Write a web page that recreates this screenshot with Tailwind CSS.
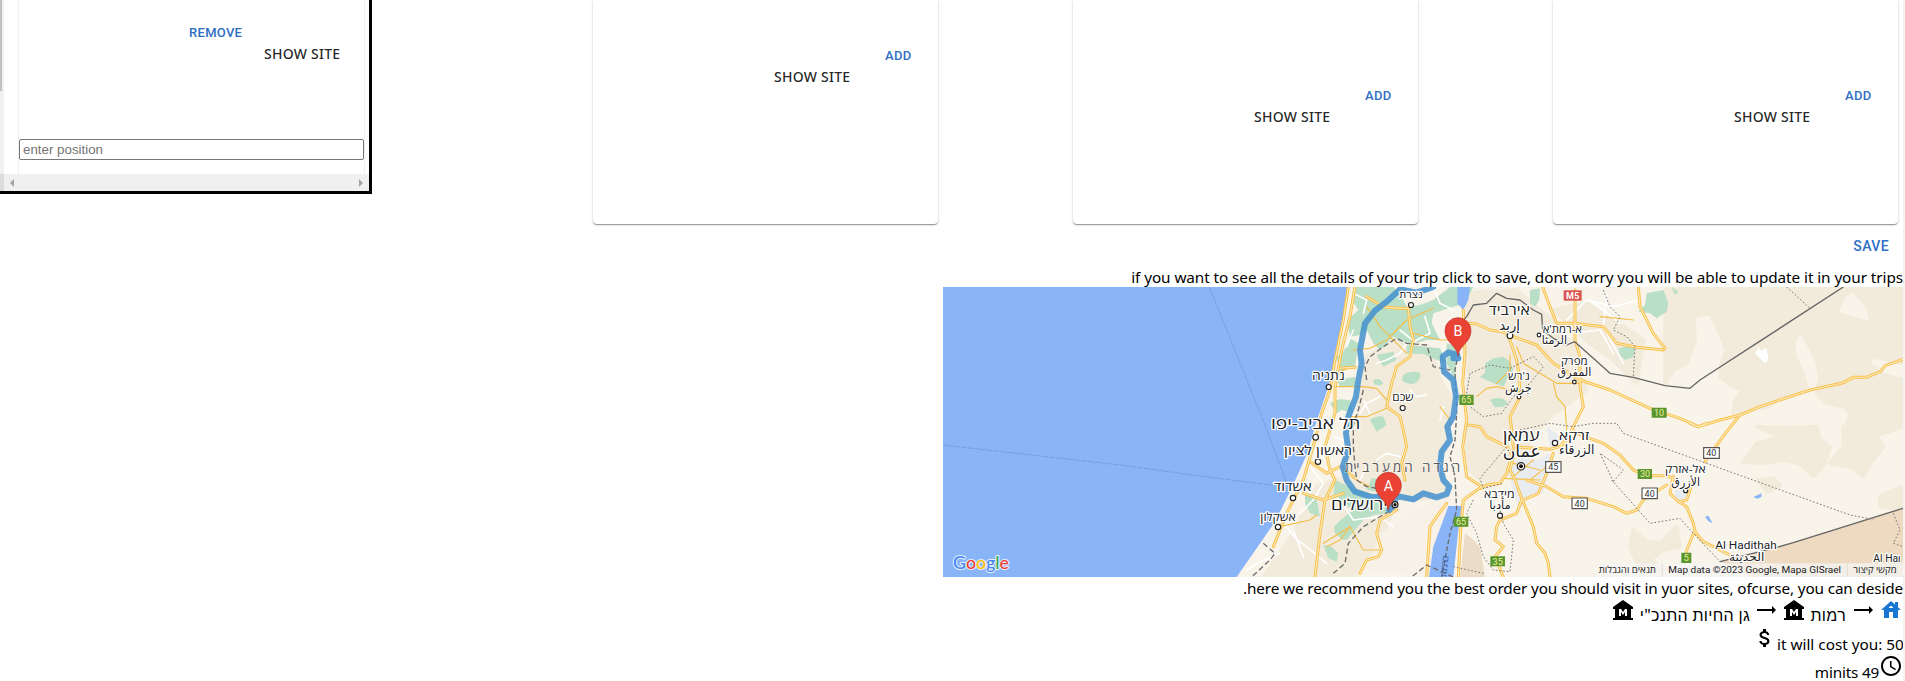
<!DOCTYPE html>
<html lang="he">
<head>
<meta charset="utf-8">
<title>Trip planner</title>
<script src="https://cdn.jsdelivr.net/npm/@tailwindcss/browser@4"></script>
</head>
<body class="bg-white">
<div class="flex h-[681px] w-[1905px] overflow-hidden font-['Noto_Sans','Liberation_Sans',sans-serif] text-black">
<main class="flex w-[1903px] flex-col">

  <!-- Site cards -->
  <section class="flex h-[224px] items-start">
    <div class="flex h-[194px] w-[372px] border-r-[3px] border-b-[3px] border-black">
      <div class="flex w-1 flex-col bg-[#f1f1f1]">
        <div class="h-[91px] w-0.5 bg-[#c1c1c1]"></div>
        <div class="mt-auto h-[17px] bg-[#dcdcdc]"></div>
      </div>
      <div class="flex grow flex-col">
        <div class="ml-[14px] flex h-[174px] w-[347px] flex-col border-x border-[#f0f0f0]">
          <div class="mt-[23px] ml-[170px] h-5 font-['Roboto',sans-serif] text-[13px] leading-5 font-medium tracking-[0.3px] text-[#2f6fc4]">REMOVE</div>
          <div class="ml-[245px] h-[22px] text-[14px] leading-[22px] font-medium tracking-[0.25px] text-black/87">SHOW SITE</div>
          <div class="mt-[74px] flex h-[21px] items-center rounded-[2px] border border-[#767676] px-[3px] font-['Liberation_Sans',sans-serif] text-[13.33px] text-[#757575]">enter position</div>
        </div>
        <div class="flex h-[17px] items-center justify-between bg-[#f0f0f0] px-1.5">
          <svg class="h-2 w-1" viewBox="0 0 4 8"><path d="M4 0v8L0 4z" fill="#a3a3a3"/></svg>
          <svg class="h-2 w-1" viewBox="0 0 4 8"><path d="M0 0v8l4-4z" fill="#a3a3a3"/></svg>
        </div>
      </div>
    </div>

    <div class="ml-[221px] flex gap-[135px]">
      <div class="h-[224px] w-[345px] rounded-b bg-white pt-[46px] shadow-[0_1px_1px_rgba(0,0,0,0.35),0_1px_3px_rgba(0,0,0,0.14)]">
        <div class="ml-[292px] h-5 font-['Roboto',sans-serif] text-[13px] leading-5 font-medium tracking-[0.3px] text-[#2f6fc4]">ADD</div>
        <div class="ml-[181px] h-[22px] text-[14px] leading-[22px] font-medium tracking-[0.25px] text-black/87">SHOW SITE</div>
      </div>
      <div class="h-[224px] w-[345px] rounded-b bg-white pt-[86px] shadow-[0_1px_1px_rgba(0,0,0,0.35),0_1px_3px_rgba(0,0,0,0.14)]">
        <div class="ml-[292px] h-5 font-['Roboto',sans-serif] text-[13px] leading-5 font-medium tracking-[0.3px] text-[#2f6fc4]">ADD</div>
        <div class="ml-[181px] h-[22px] text-[14px] leading-[22px] font-medium tracking-[0.25px] text-black/87">SHOW SITE</div>
      </div>
      <div class="h-[224px] w-[345px] rounded-b bg-white pt-[86px] shadow-[0_1px_1px_rgba(0,0,0,0.35),0_1px_3px_rgba(0,0,0,0.14)]">
        <div class="ml-[292px] h-5 font-['Roboto',sans-serif] text-[13px] leading-5 font-medium tracking-[0.3px] text-[#2f6fc4]">ADD</div>
        <div class="ml-[181px] h-[22px] text-[14px] leading-[22px] font-medium tracking-[0.25px] text-black/87">SHOW SITE</div>
      </div>
    </div>
  </section>

  <div class="flex h-[42px] items-center justify-end pt-0.5 pr-[14px] font-['Roboto',sans-serif] text-[14px] font-medium tracking-[0.4px] text-[#2f6fc4]">SAVE</div>
  <div class="h-[21px] text-right text-[15.3px] leading-[23px] tracking-[-0.073px] whitespace-nowrap">if you want to see all the details of your trip click to save, dont worry you will be able to update it in your trips</div>

  <!-- Route map: one map unit is a third of a pixel -->
  <svg class="relative ml-[943px] block h-[290px] w-[960px]" viewBox="-831 21 2880 870" fill="none" stroke-linejoin="round" stroke-linecap="round">
    <rect x="-831" y="21" width="2880" height="870" fill="#8ab4f8"/>
    <path d="M388 21L375 90L350 230L325 320L298 400L285 440L262 520L215 625L165 725L110 805L50 891H2049V21Z" fill="#f8f4ea"/>
    <g fill="#f2eadb" stroke="#f2eadb" stroke-width="12">
      <path d="M440 230L530 175L630 205L660 300L690 350L690 435L650 560L680 650L560 660L430 630L370 560L410 420Z"/>
      <path d="M290 620L380 590L520 690L470 800L400 891H130L220 760Z"/>
      <path d="M740 40L890 30L960 90L1000 120L1060 200L1100 330L990 410L930 480L900 560L800 620L740 560L745 300Z"/>
      <path d="M1335 25L2049 21V250L2010 240L1960 230L1950 170L1955 130L1945 80L1925 60L1900 30L1870 50L1850 100L1900 115L1990 140L1970 200L1945 250L1990 285L2049 300V440L1960 470L1910 455L1880 435L1890 400L1870 380L1820 370L1790 340L1800 290L1790 240L1770 200L1740 150L1720 190L1725 230L1745 270L1760 320L1700 345L1640 380L1540 400L1545 360L1570 330L1540 320L1500 290L1505 250L1520 210L1500 160L1470 100L1420 110L1425 180L1400 250L1360 270L1335 310Z"/>
      <path d="M1610 440L1700 445L1790 440L1800 480L1830 500L1810 560L1780 590L1740 550L1690 540L1630 550L1570 545L1590 520L1610 490L1680 470ZM1870 440H1950L1990 500L1950 550L1930 590L1890 560L1830 550L1870 500ZM1980 650L2049 620V690L1980 680ZM1615 600L1660 595L1680 615L1640 635ZM1240 750L1280 785L1320 790L1370 740L1380 800L1330 810L1290 840L1340 870H1260L1230 800Z"/>
      <path d="M1000 90L1100 70L1180 120L1270 180L1250 310L1180 240L1110 190Z"/>
    </g>
    <path d="M735 760L755 775L780 800L795 891H720Z" fill="#eadcc6"/>
    <path d="M1500 845L1670 802L2049 683V891H1600Z" fill="#eddac0"/>
    <path d="M700 620L690 680L640 891L440 870L480 760Z" fill="#f7f1e7"/>
    <g fill="#b9dfc7">
      <path d="M400 21H520L545 50L560 80L600 75L640 60L690 21H760L735 70L700 80L640 100L635 130L660 180L620 180L570 195L520 170L480 210L460 190L440 150L420 165L390 170L382 120L415 90L395 60Z"/>
      <path d="M390 175L415 190L405 260L375 262L360 290L350 230L370 215ZM560 195L660 205L680 250L650 240L610 222L560 220ZM330 370L360 358L390 360L400 400L365 390L350 400ZM350 300L405 290V320H360ZM550 285Q570 270 600 278Q605 300 580 312Q555 312 545 300ZM460 300Q480 290 490 312Q475 320 462 312ZM470 225L520 215L530 240L510 250L490 260ZM450 420Q470 405 490 410L500 435L470 455Z"/>
      <path d="M345 600L390 620L450 640L520 650L515 680L500 700L460 705L430 720L405 750L380 780L365 778L345 760L342 740L362 720L400 690L370 670L340 650ZM255 640L280 645L290 660L300 710L270 700L255 670ZM310 795L335 800L355 820L350 845L325 835ZM455 595L520 600L500 640L440 630Z"/>
      <path d="M795 250L820 235L850 230L870 245L880 270L865 290L850 320L810 305L778 290L795 280ZM810 360Q830 350 850 357L865 370L850 380L825 382ZM930 30L960 25L958 60L945 80L930 70ZM1280 40L1330 30L1345 70L1340 95L1310 115L1290 100L1255 95L1275 75ZM1195 205Q1225 195 1245 207L1240 230L1215 240L1200 225ZM1355 21L1375 35L1365 45ZM680 190L710 200L705 300L680 250Z"/>
    </g>
    <path d="M712 21H750L745 60L730 90L712 70ZM685 678H725L715 750L700 891H627L640 800Z" fill="#8ab4f8"/>
    <path d="M1605 220L1617 200L1620 212L1640 205L1645 240L1635 250Z" fill="#fff"/>
    <path d="M1600 651L1625 640L1624 651L1612 656ZM1455 710L1465 707L1478 730L1465 724Z" fill="#8ab4f8"/>
    <path d="M860 550L900 535L950 540L990 520L985 580L970 640L920 655L900 690L880 640ZM1365 630L1400 615L1395 665L1365 660ZM980 440L1010 460L1020 480L990 510Z" fill="#e8ebf0"/>

    <!-- Sea boundaries -->
    <g stroke="#6f9ad8" stroke-width="2.5" stroke-dasharray="14 5">
      <path d="M-60 -45L0 100L135 435L200 610"/>
      <path d="M-831 495L-300 555L0 596L160 616"/>
    </g>

    <!-- Minor roads -->
    <g stroke="#fff" stroke-width="5">
      <path d="M400 40L440 60L430 100M640 21L660 70L700 90M615 110L630 160L580 185M470 250L500 240L540 220L560 190M420 400L440 370L480 350M380 200L400 150M440 560L420 600M270 560L310 610L280 660L240 700M200 740L230 780L260 800L320 850M350 650L380 690L400 720L480 710L520 740M80 870L130 840L180 820M540 150L590 190M1040 120L1100 60L1180 80L1260 60M1060 160L1140 150L1180 220M1160 40L1150 140L1210 250M1110 60L1200 130M660 420L670 380M250 830L220 750M570 330L590 350L620 345M430 360L450 400M340 470L370 480M470 540L500 520L540 530"/>
    </g>

    <!-- Secondary roads -->
    <g stroke="#f3bf4a" stroke-width="3.5">
      <path d="M400 210L450 205L500 180L560 120L640 85M440 80L480 140L560 220M395 260L350 280M350 320L430 320L470 325L500 360M390 410L440 410L500 385M690 420L660 380M180 740L270 720L290 705M310 790L390 740L430 810L480 810M390 740L360 780L320 800M700 180L660 180L580 160M890 200L910 250L1010 310L1080 310M1000 310L1010 350L1035 380L1040 450M770 350L800 325L830 320L890 335M830 310L870 270L870 225M400 595L450 620M850 595L960 600M880 550L960 570M940 540L880 590M980 560L930 600M1240 120L1140 110"/>
    </g>

    <!-- Main roads -->
    <defs>
      <g id="main-roads">
        <path d="M385 21L370 120L345 240L330 330L305 400L285 480L250 600L200 700L160 800"/>
        <path d="M405 21L390 110L365 210L345 320L345 400L315 500L330 570L345 600L315 660L300 760L285 891"/>
        <path d="M270 545L320 580L360 560L400 590M250 640L310 660L370 640M355 265L405 262"/>
        <path d="M440 50L490 80L530 85L565 85L570 140L580 180L570 230L530 260L515 310L500 380L540 410L550 450L560 500L545 550L555 600"/>
        <path d="M530 690L480 720L470 760L485 810L475 830L440 840L420 880M680 670L650 710L630 740L620 891"/>
        <path d="M745 130L770 132L810 150L845 155L880 170L950 195L1000 250L1080 300L1170 330L1290 385L1380 415L1435 440L1500 420L1560 405L1620 380L1770 330L1870 308L1900 292H1940L1980 275L1995 257L2049 238"/>
        <path d="M1560 405L1520 455L1480 510L1455 545"/>
        <path d="M730 91L735 220L728 310L740 420L728 500L740 590L785 620L730 660L722 750L715 891"/>
        <path d="M968 21L990 80L1010 130H1060L1150 140L1190 190L1250 202L1330 210M1065 30V180L1080 230V320L1090 380L1060 440L1035 490L1020 500"/>
        <path d="M1255 21L1260 80L1300 160L1335 205"/>
        <path d="M745 435L780 440L800 470L860 500L880 530L870 570L885 600L905 655L940 740L950 790L975 820L985 850L990 891"/>
        <path d="M870 180L890 240L900 300L895 360L870 410L875 450L880 500L990 508L1020 500L1060 450"/>
        <path d="M785 625L800 615L840 610L860 580L880 510M905 660L890 700L840 720L830 740L825 780L850 800L825 830L850 891"/>
        <path d="M1000 520L980 580L955 640L910 660M920 600L980 620L1030 650L1100 655L1180 680L1220 700L1250 690L1270 660L1340 615"/>
        <path d="M1070 460L1150 490L1200 525L1240 570L1280 587H1340L1370 600M1360 590L1350 640L1370 660L1400 680L1420 730L1425 755L1450 785L1530 825M1425 750L1400 810V830"/>
        <path d="M1420 600L1400 660L1375 665M1410 430L1435 440L1460 430"/>
      </g>
    </defs>
    <use href="#main-roads" stroke="#f8c04a" stroke-width="9"/>
    <use href="#main-roads" stroke="#fdebbb" stroke-width="3.2"/>

    <!-- Borders -->
    <g stroke="#666" stroke-width="4">
      <path d="M712 140L740 110L760 75L800 70L830 40L860 55L900 60L940 90L965 103L968 150L1000 175L1040 195L1064 185L1120 235L1170 280L1240 292L1335 317L1410 325L1440 300L1870 21"/>
      <path d="M1500 845L1670 802L1720 788L2049 685"/>
    </g>
    <g stroke="#6b6b6b" stroke-width="4" stroke-linecap="butt">
      <path stroke-dasharray="16 9" d="M440 300L435 260L450 230L490 200L530 175L560 190L620 195L640 260L690 270M430 330L415 390L400 435L400 500L405 560L410 600L440 620L470 625M530 680L430 740L385 790L375 850L340 880M130 790L165 820L150 840L95 891M700 891L620 855L575 891"/>
      <path stroke-dasharray="14 7" d="M715 220L705 270L710 400L705 480L690 530L705 590L710 690L690 760L665 891"/>
    </g>
    <g stroke="#777" stroke-width="3" stroke-dasharray="5 6" stroke-linecap="butt">
      <path d="M740 340L750 280L810 255L870 265L940 230L970 260L930 310L880 350L845 400L790 410L750 380M1150 30L1170 80L1200 110L1180 150L1220 170L1245 200L1240 290M900 450L990 430L1060 440L1120 430L1190 430L1210 460L1335 505L1890 705L1960 718M860 500L780 595L790 625L850 610M1180 605L1140 520L1210 570ZM1175 600L1290 730L1380 715L1420 760L1500 845M760 660L740 700L770 760L790 830L820 870L870 875L880 780L850 730L840 690M1700 21L1770 85M2020 700L2040 750L2020 790L2049 800M700 860L790 880"/>
    </g>

    <!-- Driving route -->
    <g stroke="#4590cf" stroke-opacity=".86" stroke-width="18">
      <path d="M712 225L685 217L668 230L672 275L700 300L708 350L700 410L682 440L690 480L665 515L660 560L670 600L688 620L680 642L650 652L610 640L580 658L540 650L500 652L450 650L405 635L380 600L368 560L385 510L378 460L385 410L408 350L415 300L425 250L420 210L435 130L465 92L500 65L540 28L590 38L640 21M500 650L525 665L508 690M700 235H715"/>
    </g>

    <!-- City dots -->
    <g fill="#fff" stroke="#222" stroke-width="3.5">
      <circle cx="573" cy="75" r="7.5"/><circle cx="326" cy="321" r="7.5"/><circle cx="548" cy="384" r="7.5"/>
      <circle cx="287" cy="472" r="8.5"/><circle cx="294" cy="545" r="8"/><circle cx="219" cy="654" r="8"/><circle cx="174" cy="741" r="8"/>
      <circle cx="870" cy="167" r="8.5"/><circle cx="957" cy="165" r="5.5"/><circle cx="1063" cy="306" r="5.5"/><circle cx="897" cy="351" r="5.5"/>
      <circle cx="1005" cy="489" r="8"/><circle cx="840" cy="707" r="7.5"/><circle cx="1397" cy="632" r="6"/>
      <circle cx="903" cy="559" r="11"/><circle cx="525" cy="674" r="9"/>
    </g>
    <circle cx="903" cy="559" r="6" fill="#111"/><circle cx="525" cy="674" r="5" fill="#111"/>

    <!-- Place names -->
    <g class="font-['Open_Sans','Noto_Sans','DejaVu_Sans',sans-serif]" fill="#202124" stroke="#fff" stroke-width="7" paint-order="stroke" text-anchor="middle">
      <text x="573" y="54" font-size="30" textLength="70" lengthAdjust="spacingAndGlyphs">נצרת</text>
      <text x="325" y="299" font-size="39" textLength="98" lengthAdjust="spacingAndGlyphs">נתניה</text>
      <text x="549" y="364" font-size="33" textLength="64" lengthAdjust="spacingAndGlyphs">שכם</text>
      <text x="287" y="448" font-size="46" textLength="268" lengthAdjust="spacingAndGlyphs">תל אביב-יפו</text>
      <text x="294" y="525" font-size="39" textLength="204" lengthAdjust="spacingAndGlyphs">ראשון לציון</text>
      <text x="218" y="632" font-size="38" textLength="114" lengthAdjust="spacingAndGlyphs">אשדוד</text>
      <text x="174" y="723" font-size="34" textLength="106" lengthAdjust="spacingAndGlyphs">אשקלון</text>
      <text x="547" y="577" font-size="40" textLength="346" lengthAdjust="spacing" fill="#55585c" stroke-width="4" stroke-opacity=".5">הגדה המערבית</text>
      <text x="418" y="691" font-size="46" textLength="170" lengthAdjust="spacingAndGlyphs">ירושלים</text>
      <text x="868" y="104" font-size="40" textLength="124" lengthAdjust="spacingAndGlyphs">אירביד</text>
      <text x="869" y="150" font-size="42" textLength="62" lengthAdjust="spacingAndGlyphs">إربد</text>
      <text x="1027" y="158" font-size="33" textLength="118" lengthAdjust="spacingAndGlyphs">א-רמת'א</text>
      <text x="1003" y="193" font-size="35" textLength="76" lengthAdjust="spacingAndGlyphs">الرمثا</text>
      <text x="1063" y="255" font-size="34" textLength="80" lengthAdjust="spacingAndGlyphs">מפרק</text>
      <text x="1063" y="289" font-size="35" textLength="102" lengthAdjust="spacingAndGlyphs">المفرق</text>
      <text x="897" y="300" font-size="33" textLength="66" lengthAdjust="spacingAndGlyphs">ג'רש</text>
      <text x="895" y="336" font-size="35" textLength="80" lengthAdjust="spacingAndGlyphs">جرش</text>
      <text x="904" y="482" font-size="47" textLength="110" lengthAdjust="spacingAndGlyphs">עמאן</text>
      <text x="905" y="530" font-size="50" textLength="114" lengthAdjust="spacingAndGlyphs">عمان</text>
      <text x="1062" y="481" font-size="38" textLength="90" lengthAdjust="spacingAndGlyphs">זרקא</text>
      <text x="1070" y="522" font-size="40" textLength="106" lengthAdjust="spacingAndGlyphs">الزرقاء</text>
      <text x="838" y="654" font-size="34" textLength="92" lengthAdjust="spacingAndGlyphs">מידבא</text>
      <text x="840" y="686" font-size="36" textLength="64" lengthAdjust="spacingAndGlyphs">مأدبا</text>
      <text x="1396" y="579" font-size="33" textLength="122" lengthAdjust="spacingAndGlyphs">אל-אזרק</text>
      <text x="1397" y="617" font-size="35" textLength="86" lengthAdjust="spacingAndGlyphs">الأزرق</text>
      <text class="font-['Roboto',sans-serif]" x="1578" y="808" font-size="31" textLength="184" lengthAdjust="spacingAndGlyphs">Al Hadithah</text>
      <text x="1580" y="843" font-size="34" textLength="106" lengthAdjust="spacingAndGlyphs">الحديثة</text>
      <text class="font-['Roboto',sans-serif]" x="1960" y="847" font-size="31" text-anchor="start">Al Haı</text>
    </g>
    <text transform="translate(680 891) rotate(-85)" font-size="26" fill="#3c62a8" textLength="65" class="font-['Open_Sans',sans-serif]">ים המלח</text>

    <!-- Road shields -->
    <g class="font-['Roboto',sans-serif]" font-size="27" text-anchor="middle">
      <path d="M1031 31h54v31h-54z" fill="#d9534f"/><text x="1058" y="56" fill="#fff" font-weight="700" textLength="40">M5</text>
      <g fill="#5a962f"><path d="M718 344h43v31h-43zM1295 383h45v30h-45zM1253 567h43v30h-43zM701 710h44v30h-44zM811 829h44v30h-44zM1384 818h30v31h-30z"/></g>
      <g fill="#eef09a"><text x="739" y="369">65</text><text x="1317" y="407">10</text><text x="1275" y="592">30</text><text x="723" y="735">65</text><text x="833" y="854">35</text><text x="1399" y="843">5</text></g>
      <g fill="#fff" stroke="#555" stroke-width="3.5" stroke-linejoin="miter"><path d="M977 545h46v32h-46zM1056 654h46v32h-46zM1266 624h46v32h-46zM1451 503h47v32h-47z"/></g>
      <g fill="#333"><text x="1000" y="571">45</text><text x="1079" y="680">40</text><text x="1289" y="650">40</text><text x="1474" y="529">40</text></g>
    </g>

    <!-- Markers -->
    <g fill="#ea4335" stroke="#b93024" stroke-width="2">
      <path d="M505 690C500 660 466 650 466 616a39 39 0 0 1 78 0C544 650 510 660 505 690Z"/>
      <path d="M714 226C709 195 675 187 675 152a39 39 0 0 1 78 0C753 187 719 195 714 226Z"/>
    </g>
    <g class="font-['Roboto',sans-serif]" fill="#fff" font-size="43" text-anchor="middle"><text x="505" y="633">A</text><text x="714" y="168">B</text></g>

    <!-- Attribution -->
    <path d="M1132 850H2049V891H1132Z" fill="#f5f5f5" fill-opacity=".72"/>
    <path d="M1327 852V891M1882 852V891" stroke="#d5d3cc" stroke-width="2"/>
    <g class="font-['Roboto','Open_Sans',sans-serif]" font-size="28" fill="#222" text-anchor="middle">
      <text x="1222" y="879" font-size="28" textLength="172" lengthAdjust="spacingAndGlyphs">תנאים והגבלות</text>
      <text x="1604" y="878" textLength="518" lengthAdjust="spacingAndGlyphs">Map data ©2023 Google, Mapa GISrael</text>
      <text x="1965" y="879" font-size="28" textLength="130" lengthAdjust="spacingAndGlyphs">מקשי קיצור</text>
    </g>
    <text x="-801" y="867" class="font-['Lato',sans-serif]" font-size="53" font-weight="500" textLength="168" lengthAdjust="spacingAndGlyphs" stroke="#e8f0fe" stroke-width="6" paint-order="stroke"><tspan fill="#4285f4">G</tspan><tspan fill="#ea4335">o</tspan><tspan fill="#fbbc04">o</tspan><tspan fill="#4285f4">g</tspan><tspan fill="#34a853">l</tspan><tspan fill="#ea4335">e</tspan></text>
  </svg>

  <!-- Trip summary -->
  <div class="h-[21px] text-right text-[15.3px] leading-[23px] tracking-[-0.14px] whitespace-nowrap">.here we recommend you the best order you should visit in yuor sites, ofcurse, you can deside</div>
  <div dir="rtl" class="flex h-[28px] items-start text-[16px] leading-[35px]">
    <svg class="size-6 fill-[#1976d2]" viewBox="0 0 24 24"><path d="M19 9.3V4h-3v2.6L12 3 2 12h3v8h5v-6h4v6h5v-8h3l-3-2.7zm-9 .7c0-1.1.9-2 2-2s2 .9 2 2h-4z"/></svg>
    <svg class="mr-1 size-6" viewBox="0 0 24 24"><path d="m22 12-4-4v3H3v2h15v3z"/></svg>
    <span class="mr-[5px] w-[35px] tracking-[0.3px] whitespace-nowrap">רמות</span>
    <svg class="mr-[5px] size-6" viewBox="0 0 24 24"><path d="M22 11V9L12 2 2 9v2h2v9H2v2h20v-2h-2v-9h2zm-6 7h-2v-4l-2 3-2-3v4H8v-7h2l2 3 2-3h2v7z"/></svg>
    <svg class="mr-1 size-6" viewBox="0 0 24 24"><path d="m22 12-4-4v3H3v2h15v3z"/></svg>
    <span class="mr-1 w-[110px] tracking-[0.3px] whitespace-nowrap">גן החיות התנכ"י</span>
    <svg class="mr-[5px] size-6" viewBox="0 0 24 24"><path d="M22 11V9L12 2 2 9v2h2v9H2v2h20v-2h-2v-9h2zm-6 7h-2v-4l-2 3-2-3v4H8v-7h2l2 3 2-3h2v7z"/></svg>
  </div>
  <div class="flex h-[28px] items-start justify-end text-[15.3px] leading-[36px]">
    <svg class="size-6" viewBox="0 0 24 24"><path d="M11.8 10.9c-2.27-.59-3-1.2-3-2.15 0-1.09 1.01-1.85 2.7-1.85 1.78 0 2.44.85 2.5 2.1h2.21c-.07-1.72-1.12-3.3-3.21-3.81V3h-3v2.16c-1.94.42-3.5 1.68-3.5 3.61 0 2.31 1.91 3.46 4.7 4.13 2.5.6 3 1.48 3 2.41 0 .69-.49 1.79-2.7 1.79-2.06 0-2.87-.92-2.98-2.1h-2.2c.12 2.19 1.76 3.42 3.68 3.83V21h3v-2.15c1.95-.37 3.5-1.5 3.5-3.55 0-2.84-2.43-3.81-4.7-4.4z"/></svg>
    <span class="w-[126px] text-right whitespace-nowrap">it will cost you: 50</span>
  </div>
  <div class="flex h-[27px] items-start justify-end text-[15.3px] leading-[36px] tracking-[-0.2px]">
    <span>minits 49</span>
    <svg class="size-6" viewBox="0 0 24 24"><path d="M11.99 2C6.47 2 2 6.48 2 12s4.47 10 9.99 10C17.52 22 22 17.52 22 12S17.52 2 11.99 2zM12 20c-4.42 0-8-3.58-8-8s3.58-8 8-8 8 3.58 8 8-3.58 8-8 8zm.5-13H11v6l5.25 3.15.75-1.23-4.5-2.67z"/></svg>
  </div>
</main>
<div class="w-0.5 bg-[#f3f3f3]"></div>
</div>
</body>
</html>
